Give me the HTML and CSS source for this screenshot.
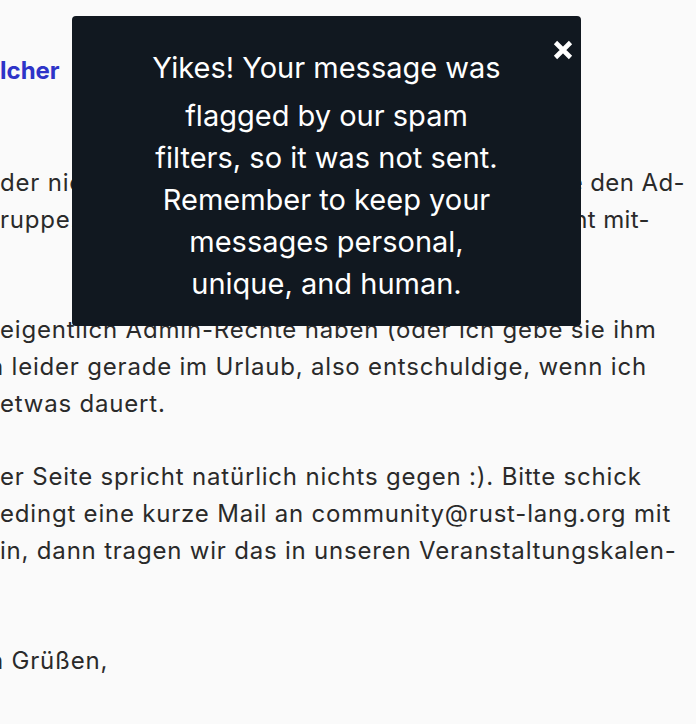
FILE: index.html
```html
<!DOCTYPE html>
<html lang="de">
<head>
<meta charset="utf-8">
<title>Nachricht</title>
<link rel="stylesheet" href="styles.css">
</head>
<body>
<main class="article">
  <h2 class="author"><span class="pre">We</span>lcher</h2>

  <p class="para">
    <span class="ln split w-ad"><span><span class="pre">Ob Carl o</span>der nicht, weiß ich nicht. Ich übertrag</span><span class="tight">e den Ad-</span></span>
    <span class="ln split w-mit"><span><span class="pre">min-G</span>ruppe. Den Termin gebe ich im Eve</span><span class="tight">nt mit-</span></span>
    <span class="ln"><span class="pre">teilen.</span></span>
  </p>

  <p class="para">
    <span class="ln"><span class="pre">Er sollte </span>eigentlich Admin-Rechte haben (oder ich gebe sie ihm</span>
    <span class="ln"><span class="pre cut-n">Ich bin</span> leider gerade im Urlaub, also entschuldige, wenn ich</span>
    <span class="ln"><span class="pre">es </span>etwas dauert.</span>
  </p>

  <p class="para">
    <span class="ln"><span class="pre">Von unser</span>er Seite spricht natürlich nichts gegen :). Bitte schick</span>
    <span class="ln"><span class="pre">uns unb</span>edingt eine kurze Mail an community@rust-lang.org mit</span>
    <span class="ln"><span class="pre">dem Term</span>in, dann tragen wir das in unseren Veranstaltungskalen-</span>
    <span class="ln"><span class="pre">der ein.</span></span>
  </p>

  <p class="para">
    <span class="ln"><span class="pre cut-n">Mit freundlichen</span> Grüßen,</span>
  </p>
</main>

<div class="toast" role="alert">
  <button class="toast-close" aria-label="Schließen">
    <svg width="20" height="20" viewBox="0 0 20 20"><path d="M2.5 2.5 L17.5 17.5 M17.5 2.5 L2.5 17.5" stroke="#ffffff" stroke-width="4.6" stroke-linecap="butt" fill="none"/></svg>
  </button>
  <p class="toast-text"><span class="toast-first">Yikes! Your message was</span>flagged by our spam<br>filters, so it was not sent.<br>Remember to keep your<br>messages personal,<br>unique, and human.</p>
</div>
</body>
</html>
```

FILE: styles.css
```css
html, body {
  margin: 0;
  padding: 0;
}

body {
  background: #fafafa;
  color: #2a2a2a;
  font-family: "Inter", "Liberation Sans", sans-serif;
  width: 696px;
  height: 724px;
  overflow: hidden;
  position: relative;
}

.article {
  margin-left: -60px;
  padding-top: 55px;
}

.author {
  margin: 0 0 77px;
  font-size: 24px;
  line-height: 32px;
  font-weight: 700;
  color: #2e34c8;
  white-space: nowrap;
}

.para {
  margin: 0 0 36px;
  font-size: 24px;
  line-height: 37px;
  letter-spacing: 0.8px;
}

.ln {
  display: block;
  white-space: nowrap;
}

.split {
  display: flex;
  justify-content: space-between;
}

.tight {
  letter-spacing: 0.4px;
}

.w-ad { width: 745px; }
.w-mit { width: 710px; }

.pre {
  display: inline-flex;
  justify-content: flex-end;
  width: 60px;
  overflow: hidden;
  vertical-align: top;
  white-space: nowrap;
}

.pre.cut-n { width: 64px; }

.toast {
  position: absolute;
  left: 72px;
  top: 16px;
  width: 509px;
  box-sizing: border-box;
  padding: 31px 20px 21px;
  background: #111820;
  border-radius: 4px;
  color: #ffffff;
}

.toast-close {
  position: absolute;
  top: 24px;
  right: 8px;
  width: 20px;
  height: 20px;
  padding: 0;
  border: 0;
  background: none;
  display: flex;
}

.toast-text {
  margin: 0;
  text-align: center;
  font-size: 29px;
  line-height: 42px;
  letter-spacing: 0;
}

.toast-first {
  display: block;
  margin-bottom: 6px;
}
```
